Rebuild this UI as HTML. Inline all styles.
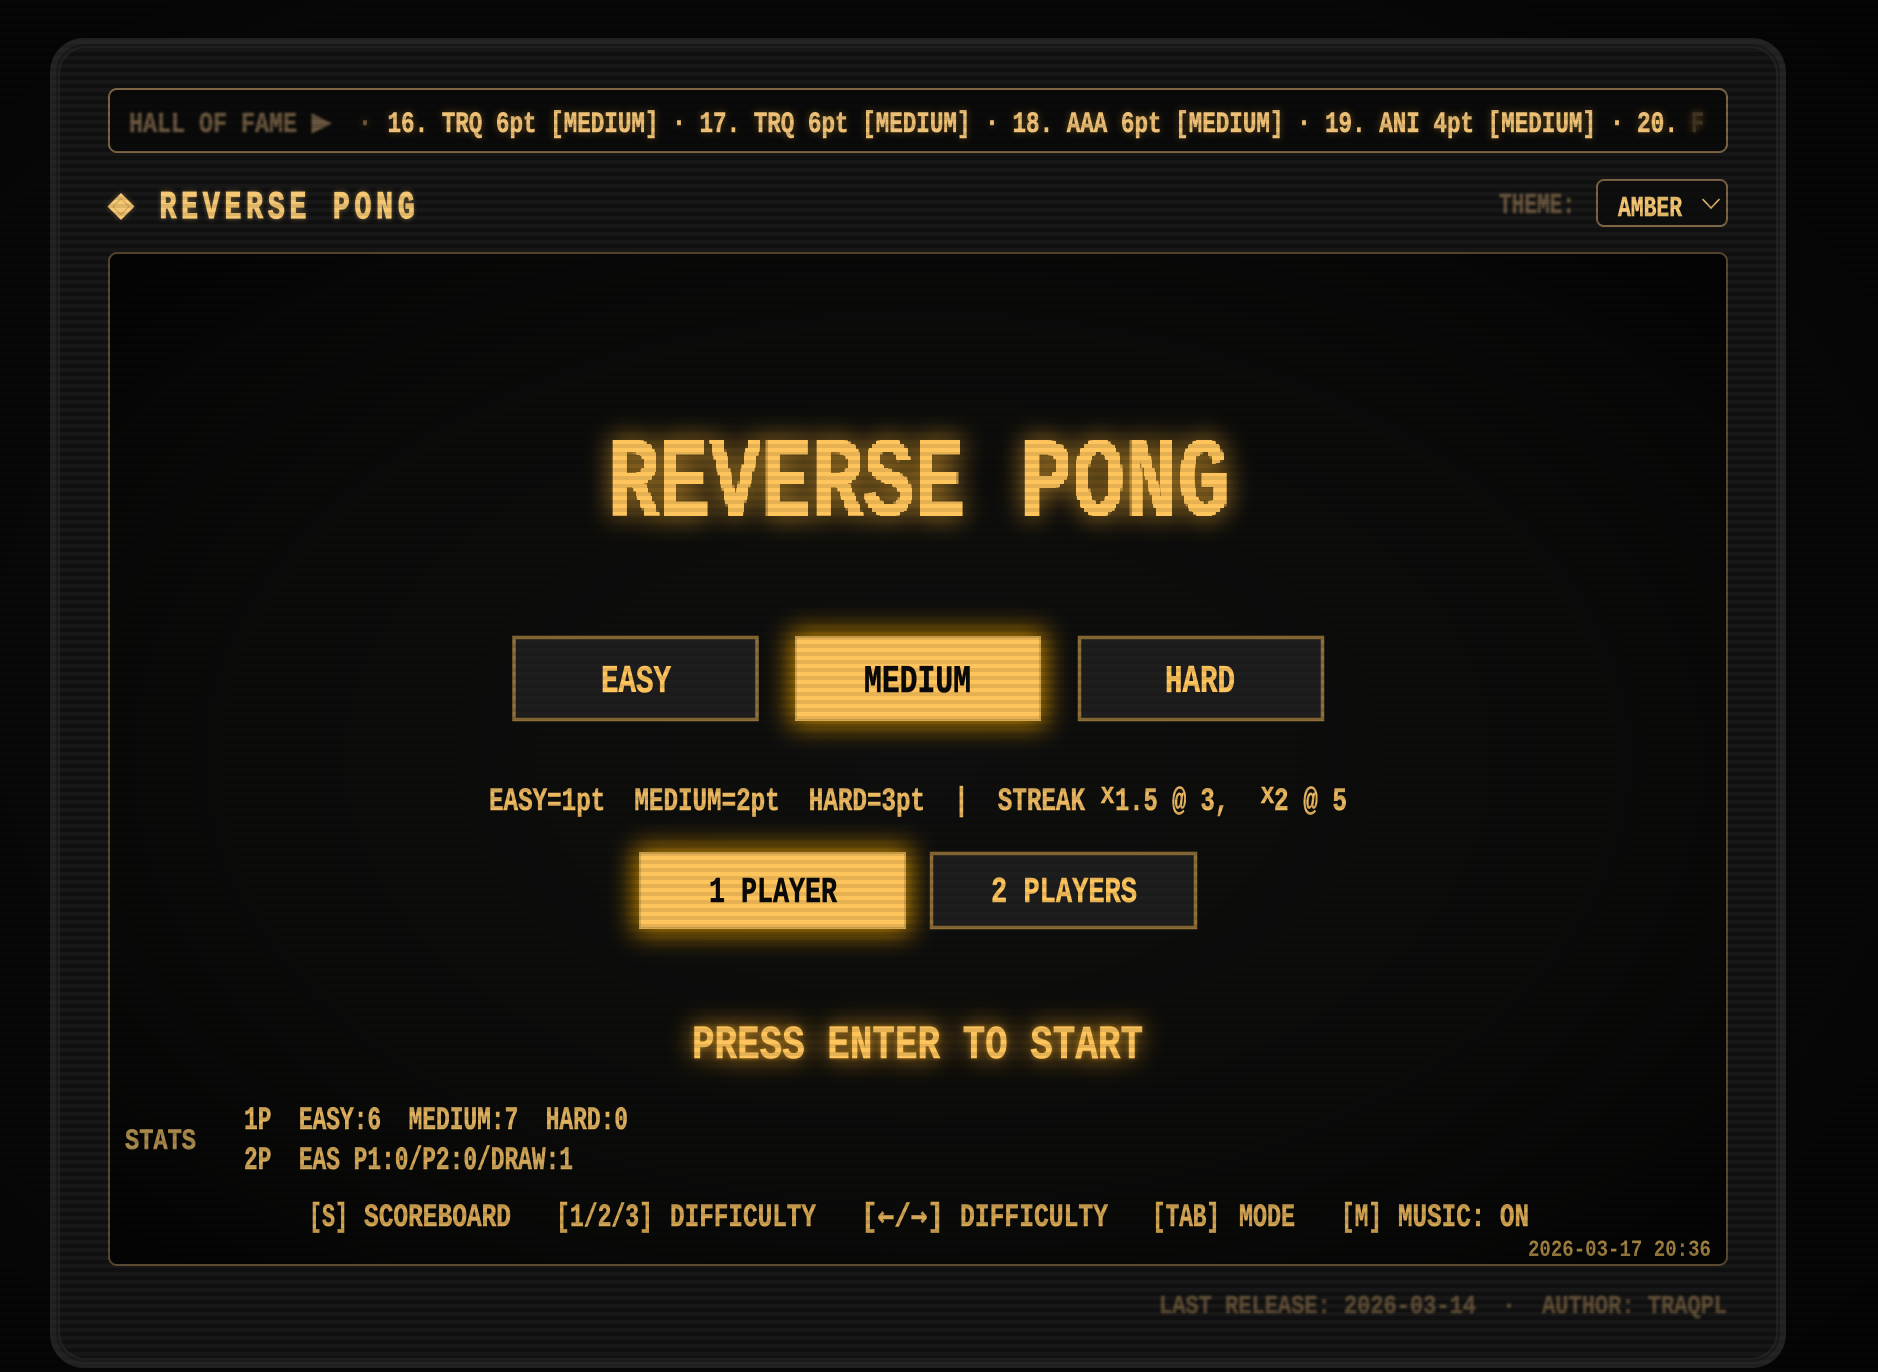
<!DOCTYPE html>
<html><head><meta charset="utf-8"><title>Reverse Pong</title>
<style>
html,body{margin:0;padding:0;background:#060606;width:1878px;height:1372px;overflow:hidden}
svg{display:block}
text{font-family:"Liberation Mono","DejaVu Sans Mono",monospace;font-weight:700;white-space:pre;stroke-linejoin:miter}
.s{stroke-width:.6px}
</style></head><body>
<svg xmlns="http://www.w3.org/2000/svg" width="1878" height="1372" viewBox="0 0 1878 1372">
<defs>
<pattern id="scan" width="8" height="8" patternUnits="userSpaceOnUse"><rect y="4" width="8" height="4" fill="#000" fill-opacity=".1"/></pattern>
<pattern id="scan2" width="8" height="8" patternUnits="userSpaceOnUse"><rect y="4" width="8" height="4" fill="#000" fill-opacity=".2"/></pattern>
<radialGradient id="scr" cx=".5" cy=".5" r=".7"><stop offset="0" stop-color="#0f0f0e"/><stop offset=".6" stop-color="#0b0b0a"/><stop offset="1" stop-color="#040404"/></radialGradient>
<radialGradient id="bg" cx=".45" cy=".5" r=".75"><stop offset="0" stop-color="#0c0c0c"/><stop offset="1" stop-color="#050505"/></radialGradient>
<filter id="b10" x="-40%" y="-90%" width="180%" height="280%"><feGaussianBlur stdDeviation="13"/></filter>
<filter id="g1" x="-10%" y="-60%" width="120%" height="220%"><feGaussianBlur stdDeviation="3"/></filter>
<filter id="g2" filterUnits="userSpaceOnUse" x="0" y="0" width="1878" height="1372"><feGaussianBlur stdDeviation="13"/></filter>
<filter id="d1" x="-10%" y="-40%" width="120%" height="180%"><feGaussianBlur stdDeviation="1"/></filter>
<filter id="px4" filterUnits="userSpaceOnUse" x="0" y="0" width="1878" height="1372">
<feFlood x="1" y="1" width="2" height="2"/><feComposite width="4" height="4"/><feTile result="a"/>
<feComposite in="SourceGraphic" in2="a" operator="in"/><feMorphology operator="dilate" radius="1"/>
</filter>
</defs>
<rect width="1878" height="1372" fill="url(#bg)"/>
<rect x="50" y="38" width="1736" height="1330" rx="34" fill="#242424"/>
<rect x="56" y="44" width="1724" height="1318" rx="29" fill="#1a1a1a"/>
<rect x="58" y="46" width="1720" height="1314" rx="27" fill="#222"/>
<rect x="60" y="48" width="1716" height="1310" rx="26" fill="#171717"/>
<rect x="60" y="48" width="1716" height="1310" rx="26" fill="url(#scan2)"/>

<!-- ticker -->
<rect x="109" y="89" width="1618" height="63" rx="8" fill="#0a0a0a" stroke="#7d6545" stroke-width="2"/>
<g fill="#67553c" stroke="#67553c" filter="url(#d1)">
<text class="s" x="129" y="132" font-size="29" textLength="168" lengthAdjust="spacingAndGlyphs">HALL OF FAME</text>
<polygon points="312,114 331,123.5 312,133"/>
</g>
<g fill="#eec177" stroke="#eec177" style="filter:drop-shadow(0 0 4px #ffb73355)">
<text class="s" x="358" y="131" font-size="30" textLength="14" lengthAdjust="spacingAndGlyphs" fill="#67553c" stroke="#67553c">·</text>
<text class="s" x="387.5" y="132" font-size="30" textLength="271" lengthAdjust="spacingAndGlyphs">16. TRQ 6pt [MEDIUM]</text>
<text class="s" x="672" y="131" font-size="30" textLength="14" lengthAdjust="spacingAndGlyphs">·</text>
<text class="s" x="699.5" y="132" font-size="30" textLength="271" lengthAdjust="spacingAndGlyphs">17. TRQ 6pt [MEDIUM]</text>
<text class="s" x="985" y="131" font-size="30" textLength="14" lengthAdjust="spacingAndGlyphs">·</text>
<text class="s" x="1012.5" y="132" font-size="30" textLength="271" lengthAdjust="spacingAndGlyphs">18. AAA 6pt [MEDIUM]</text>
<text class="s" x="1297" y="131" font-size="30" textLength="14" lengthAdjust="spacingAndGlyphs">·</text>
<text class="s" x="1325" y="132" font-size="30" textLength="271" lengthAdjust="spacingAndGlyphs">19. ANI 4pt [MEDIUM]</text>
<text class="s" x="1610" y="131" font-size="30" textLength="14" lengthAdjust="spacingAndGlyphs">·</text>
<text class="s" x="1637" y="132" font-size="30" textLength="41" lengthAdjust="spacingAndGlyphs">20.</text>
<text class="s" x="1691" y="132" font-size="30" textLength="13" lengthAdjust="spacingAndGlyphs" fill="#3f3323" stroke="#3f3323">F</text>
</g>

<!-- header -->
<polygon points="121,193 134.5,206.5 121,220 107.5,206.5" fill="#f7c873" style="filter:drop-shadow(0 0 3px #f7c87355)"/>
<polygon points="121,198.5 129,206.5 121,214.5 113,206.5" fill="none" stroke="#c99d55" stroke-width=".8"/>
<text transform="translate(159.5 218) scale(.72 1)" font-size="39" letter-spacing="6.7" fill="#f7c873" stroke="#f7c873" stroke-width="1.2" style="filter:drop-shadow(0 0 3px #f7c87366)">REVERSE PONG</text>
<text class="s" x="1499" y="213" font-size="29" textLength="76" lengthAdjust="spacingAndGlyphs" fill="#67553c" stroke="#67553c" filter="url(#d1)">THEME:</text>
<rect x="1597" y="180" width="130" height="46" rx="7" fill="#0e0e0e" stroke="#7d6545" stroke-width="2"/>
<text class="s" x="1618" y="216" font-size="29" textLength="64" lengthAdjust="spacingAndGlyphs" fill="#f7c873" stroke="#f7c873">AMBER</text>
<polyline points="1702.5,199 1711,208 1719.5,199" fill="none" stroke="#e8bd70" stroke-width="1.6"/>

<!-- screen -->
<rect x="109" y="253" width="1618" height="1012" rx="8" fill="url(#scr)" stroke="#5a4930" stroke-width="2"/>

<!-- big title -->
<g font-size="112">
<g fill="#ffb733" stroke="#ffb733" stroke-width="6" opacity=".6" filter="url(#g2)">
<text x="608" y="515" textLength="357" lengthAdjust="spacingAndGlyphs">REVERSE</text>
<text x="1020" y="515" textLength="210" lengthAdjust="spacingAndGlyphs">PONG</text>
</g>
<g fill="#ffc55c" filter="url(#px4)">
<text x="608" y="515" textLength="357" lengthAdjust="spacingAndGlyphs">REVERSE</text>
<text x="1020" y="515" textLength="210" lengthAdjust="spacingAndGlyphs">PONG</text>
</g>
</g>

<!-- difficulty -->
<rect x="514" y="637.5" width="243" height="82" fill="#1e1e1e" stroke="#8f7038" stroke-width="3.5"/>
<rect x="790" y="631" width="256" height="95" fill="#c08400" filter="url(#b10)"/>
<rect x="796" y="637" width="244" height="83" fill="#ffc55c" stroke="#d6a94f" stroke-width="2"/>
<rect x="1079.5" y="637.5" width="243" height="82" fill="#1e1e1e" stroke="#8f7038" stroke-width="3.5"/>
<text class="s" x="601" y="692" font-size="39" textLength="70" lengthAdjust="spacingAndGlyphs" fill="#ffc55c" stroke="#ffc55c">EASY</text>
<text class="s" x="864" y="692" font-size="39" textLength="107" lengthAdjust="spacingAndGlyphs" fill="#0a0a0a" stroke="#0a0a0a">MEDIUM</text>
<text class="s" x="1165" y="692" font-size="39" textLength="70" lengthAdjust="spacingAndGlyphs" fill="#ffc55c" stroke="#ffc55c">HARD</text>

<g fill="#ecb961" stroke="#ecb961">
<text class="s" x="489" y="810" font-size="32" textLength="596" lengthAdjust="spacingAndGlyphs">EASY=1pt  MEDIUM=2pt  HARD=3pt  |  STREAK</text>
<text class="s" x="1101" y="803" font-size="24" textLength="13" lengthAdjust="spacingAndGlyphs">X</text>
<text class="s" x="1115" y="810" font-size="32" textLength="114" lengthAdjust="spacingAndGlyphs">1.5 @ 3,</text>
<text class="s" x="1261" y="803" font-size="24" textLength="13" lengthAdjust="spacingAndGlyphs">X</text>
<text class="s" x="1274" y="810" font-size="32" textLength="73" lengthAdjust="spacingAndGlyphs">2 @ 5</text>
</g>

<!-- mode -->
<rect x="634" y="847" width="277" height="87" fill="#c08400" filter="url(#b10)"/>
<rect x="640" y="853" width="265" height="75" fill="#ffc55c" stroke="#d6a94f" stroke-width="2"/>
<rect x="931.5" y="853.5" width="264" height="74" fill="#1e1e1e" stroke="#8f7038" stroke-width="3.5"/>
<text class="s" x="709" y="902" font-size="36" textLength="128" lengthAdjust="spacingAndGlyphs" fill="#0a0a0a" stroke="#0a0a0a">1 PLAYER</text>
<text class="s" x="991" y="902" font-size="36" textLength="146" lengthAdjust="spacingAndGlyphs" fill="#ffc55c" stroke="#ffc55c">2 PLAYERS</text>

<!-- press enter -->
<text x="692" y="1058" font-size="47" textLength="451" lengthAdjust="spacingAndGlyphs" fill="#e8a020" stroke="#e8a020" stroke-width="3" opacity=".75" filter="url(#g2)">PRESS ENTER TO START</text>
<text class="s" x="692" y="1058" font-size="47" textLength="451" lengthAdjust="spacingAndGlyphs" fill="#ffc55c" stroke="#ffc55c" style="filter:drop-shadow(0 0 3px #ffb73366)">PRESS ENTER TO START</text>

<!-- stats -->
<text class="s" x="125" y="1149" font-size="30" textLength="71" lengthAdjust="spacingAndGlyphs" fill="#a98a4c" stroke="#a98a4c">STATS</text>
<text class="s" x="244" y="1129" font-size="32" textLength="384" lengthAdjust="spacingAndGlyphs" fill="#e0b25f" stroke="#e0b25f">1P  EASY:6  MEDIUM:7  HARD:0</text>
<text class="s" x="244" y="1169" font-size="32" textLength="329" lengthAdjust="spacingAndGlyphs" fill="#d4a859" stroke="#d4a859">2P  EAS P1:0/P2:0/DRAW:1</text>
<g fill="#d5a653" stroke="#d5a653" font-size="32">
<text class="s" x="309" y="1226" textLength="39" lengthAdjust="spacingAndGlyphs">[S]</text>
<text class="s" x="364" y="1226" textLength="147" lengthAdjust="spacingAndGlyphs">SCOREBOARD</text>
<text class="s" x="556" y="1226" textLength="97" lengthAdjust="spacingAndGlyphs">[1/2/3]</text>
<text class="s" x="670" y="1226" textLength="146" lengthAdjust="spacingAndGlyphs">DIFFICULTY</text>
<text class="s" x="861" y="1226" textLength="83" lengthAdjust="spacingAndGlyphs">[<tspan font-family="DejaVu Sans Mono">←</tspan>/<tspan font-family="DejaVu Sans Mono">→</tspan>]</text>
<text class="s" x="960" y="1226" textLength="148" lengthAdjust="spacingAndGlyphs">DIFFICULTY</text>
<text class="s" x="1152" y="1226" textLength="68" lengthAdjust="spacingAndGlyphs">[TAB]</text>
<text class="s" x="1239" y="1226" textLength="56" lengthAdjust="spacingAndGlyphs">MODE</text>
<text class="s" x="1341" y="1226" textLength="41" lengthAdjust="spacingAndGlyphs">[M]</text>
<text class="s" x="1398" y="1226" textLength="131" lengthAdjust="spacingAndGlyphs">MUSIC: ON</text>
</g>
<text x="1528" y="1256" font-size="23" textLength="183" lengthAdjust="spacingAndGlyphs" fill="#a08040">2026-03-17 20:36</text>

<!-- footer -->
<text class="s" x="1159" y="1313" font-size="26" textLength="568" lengthAdjust="spacingAndGlyphs" fill="#5e4d35" stroke="#5e4d35" filter="url(#d1)">LAST RELEASE: 2026-03-14  ·  AUTHOR: TRAQPL</text>

<rect width="1878" height="1372" fill="url(#scan)"/>
</svg>
</body></html>
